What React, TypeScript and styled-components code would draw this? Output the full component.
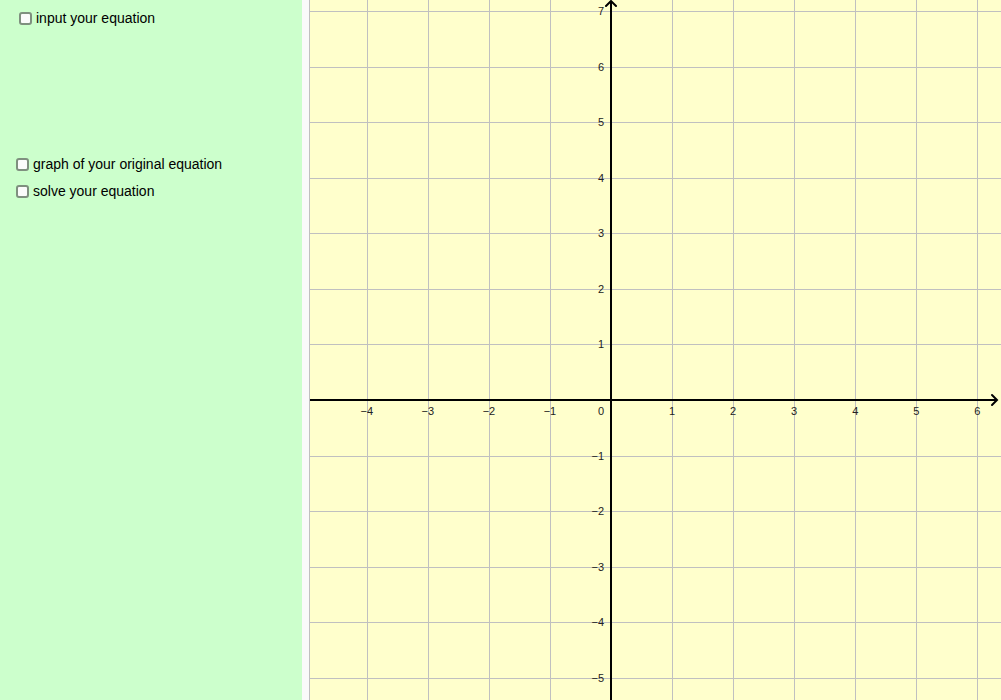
import React from "react";
import styled, { createGlobalStyle } from "styled-components";

const GlobalStyle = createGlobalStyle`
  html, body {
    margin: 0;
    padding: 0;
    overflow: hidden;
  }
  body {
    font-family: "Liberation Sans", Arial, sans-serif;
  }
`;

const Page = styled.div`
  display: flex;
  width: 1001px;
  height: 700px;
`;

const Sidebar = styled.div`
  width: 302px;
  height: 100%;
  background: #ccffcc;
  display: flex;
  flex-direction: column;
`;

const Gutter = styled.div`
  width: 7px;
  height: 100%;
  background: #fafafa;
  border-right: 1px solid #c0c0c0;
`;

const GraphArea = styled.div`
  flex: 1;
  height: 100%;
  background: #ffffcc;
  overflow: hidden;
`;

const Row = styled.label<{ $indent: number; $top: number }>`
  display: flex;
  align-items: center;
  gap: 4px;
  margin-left: ${(p) => p.$indent}px;
  margin-top: ${(p) => p.$top}px;
  font-size: 14px;
  color: #000;
  height: 18px;
`;

const Box = styled.span`
  display: block;
  flex: none;
  width: 13px;
  height: 13px;
  background: #fbfbfb;
  border: 2px solid #7f907f;
  border-radius: 3px;
  box-sizing: border-box;
`;

const items = [
  { text: "input your equation", indent: 19, top: 9 },
  { text: "graph of your original equation", indent: 16, top: 128 },
  { text: "solve your equation", indent: 16, top: 9 },
];

const W = 691;
const H = 700;
const OX = 301;
const OY = 400;
const UX = 61.05;
const UY = 55.55;

const px = (v: number) => Math.round(v) + 0.5;

const Graph: React.FC = () => {
  const xs: number[] = [];
  for (let k = -4; k <= 6; k++) xs.push(k);
  const ys: number[] = [];
  for (let k = -5; k <= 7; k++) ys.push(k);
  const lbl = (k: number) => (k < 0 ? "\u2212" + Math.abs(k) : String(k));

  return (
    <svg width={W} height={H} viewBox={`0 0 ${W} ${H}`}>
      <g stroke="#c0c0c0" strokeWidth={1}>
        {xs.map((k) =>
          k === 0 ? null : (
            <line key={"x" + k} x1={px(OX + k * UX)} y1={0} x2={px(OX + k * UX)} y2={H} />
          )
        )}
        {ys.map((k) =>
          k === 0 ? null : (
            <line key={"y" + k} x1={0} y1={px(OY - k * UY)} x2={W} y2={px(OY - k * UY)} />
          )
        )}
      </g>
      <g stroke="#000" strokeWidth={2} fill="none">
        <line x1={0} y1={OY} x2={687} y2={OY} />
        <polyline points="682,395 687,400 682,405" strokeLinecap="round" />
        <line x1={OX} y1={H} x2={OX} y2={1} />
        <polyline points="296,6 301,1 306,6" strokeLinecap="round" />
      </g>
      <g fontFamily="Liberation Sans, Arial, sans-serif" fontSize={11} fill="#222">
        {xs.map((k) =>
          k === 0 ? null : (
            <text key={"lx" + k} x={OX + k * UX} y={415} textAnchor="middle">
              {lbl(k)}
            </text>
          )
        )}
        {ys.map((k) =>
          k === 0 ? null : (
            <text key={"ly" + k} x={294} y={OY - k * UY + 4} textAnchor="end">
              {lbl(k)}
            </text>
          )
        )}
        <text x={294} y={415} textAnchor="end">
          0
        </text>
      </g>
    </svg>
  );
};

export default function App() {
  return (
    <>
      <GlobalStyle />
      <Page>
        <Sidebar>
          {items.map((it) => (
            <Row key={it.text} $indent={it.indent} $top={it.top}>
              <Box />
              {it.text}
            </Row>
          ))}
        </Sidebar>
        <Gutter />
        <GraphArea>
          <Graph />
        </GraphArea>
      </Page>
    </>
  );
}
